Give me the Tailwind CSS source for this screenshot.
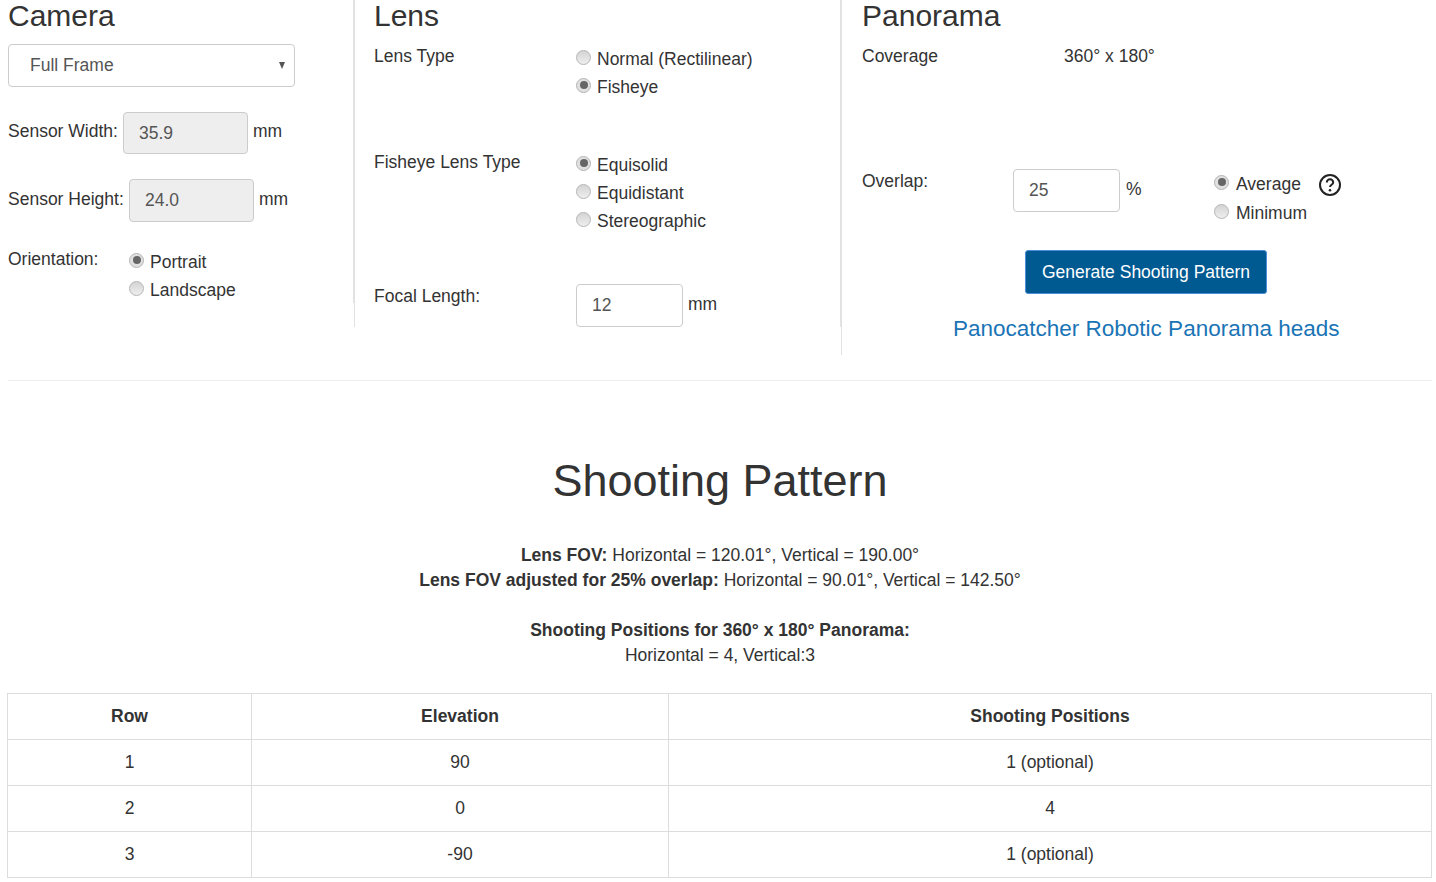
<!DOCTYPE html>
<html><head><meta charset="utf-8"><title>Panorama</title>
<script src="https://cdn.jsdelivr.net/npm/@tailwindcss/browser@4"></script></head>
<body class="bg-white overflow-hidden text-[#333] text-[17.5px] leading-[25px] font-['Liberation_Sans',Arial,sans-serif]">
<div class="h-[882px] w-[1436px] overflow-hidden pl-[8px] pr-[4px]">
  <div class="flex h-[372px] items-start">
    <!-- Camera -->
    <section class="w-[346px] h-[303px] border-r border-[#e2e2e2]">
      <h3 class="text-[30px] leading-[32px] h-[44px] text-[#333]">Camera</h3>
      <div class="w-[287px] h-[43px] border border-[#ccc] rounded-[4px] flex items-center justify-between pl-[21px] pr-[9px] text-[#555]"><span>Full Frame</span><span class="w-0 h-0 border-l-[3.5px] border-r-[3.5px] border-t-[7px] border-l-transparent border-r-transparent border-t-[#555]"></span></div>
      <div class="flex items-center mt-[25px] h-[42px]"><span class="w-[115px] -mt-[3px]">Sensor Width:</span><div class="w-[125px] h-[42px] bg-[#eee] border border-[#ccc] rounded-[4px] pl-[15px] flex items-center text-[#555]">35.9</div><span class="ml-[5px] -mt-[3px]">mm</span></div>
      <div class="flex items-center mt-[25px] h-[43px]"><span class="w-[121px] -mt-[2px]">Sensor Height:</span><div class="w-[125px] h-[43px] bg-[#eee] border border-[#ccc] rounded-[4px] pl-[15px] flex items-center text-[#555]">24.0</div><span class="ml-[5px] -mt-[2px]">mm</span></div>
      <div class="flex mt-[25px]"><span class="w-[121px]">Orientation:</span>
        <div class="flex flex-col pt-[3px] gap-[3px]">
          <label class="flex items-center gap-[6px] h-[25px]"><span class="w-[15px] h-[15px] rounded-full border border-[#b5b5b5] bg-[#e0e0e0] flex items-center justify-center -mt-[5px]"><span class="w-[8px] h-[8px] rounded-full bg-[#666]"></span></span>Portrait</label>
          <label class="flex items-center gap-[6px] h-[25px]"><span class="w-[15px] h-[15px] rounded-full border border-[#b5b5b5] bg-gradient-to-b from-[#d4d4d4] to-[#eee] -mt-[5px]"></span>Landscape</label>
        </div>
      </div>
    </section>
    <!-- Lens -->
    <section class="w-[487px] h-[327px] border-x border-[#e2e2e2] pl-[19px]">
      <h3 class="text-[30px] leading-[32px] h-[44px]">Lens</h3>
      <div class="flex h-[106px]"><span class="w-[202px]">Lens Type</span>
        <div class="flex flex-col pt-[3px] gap-[3px]">
          <label class="flex items-center gap-[6px] h-[25px]"><span class="w-[15px] h-[15px] rounded-full border border-[#b5b5b5] bg-gradient-to-b from-[#d4d4d4] to-[#eee] -mt-[5px]"></span>Normal (Rectilinear)</label>
          <label class="flex items-center gap-[6px] h-[25px]"><span class="w-[15px] h-[15px] rounded-full border border-[#b5b5b5] bg-[#e0e0e0] flex items-center justify-center -mt-[5px]"><span class="w-[8px] h-[8px] rounded-full bg-[#666]"></span></span>Fisheye</label>
        </div>
      </div>
      <div class="flex h-[134px]"><span class="w-[202px]">Fisheye Lens Type</span>
        <div class="flex flex-col pt-[3px] gap-[3px]">
          <label class="flex items-center gap-[6px] h-[25px]"><span class="w-[15px] h-[15px] rounded-full border border-[#b5b5b5] bg-[#e0e0e0] flex items-center justify-center -mt-[5px]"><span class="w-[8px] h-[8px] rounded-full bg-[#666]"></span></span>Equisolid</label>
          <label class="flex items-center gap-[6px] h-[25px]"><span class="w-[15px] h-[15px] rounded-full border border-[#b5b5b5] bg-gradient-to-b from-[#d4d4d4] to-[#eee] -mt-[5px]"></span>Equidistant</label>
          <label class="flex items-center gap-[6px] h-[25px]"><span class="w-[15px] h-[15px] rounded-full border border-[#b5b5b5] bg-gradient-to-b from-[#d4d4d4] to-[#eee] -mt-[5px]"></span>Stereographic</label>
        </div>
      </div>
      <div class="flex"><span class="w-[202px]">Focal Length:</span><div class="w-[107px] h-[43px] border border-[#ccc] rounded-[4px] pl-[15px] flex items-center text-[#555]">12</div><span class="ml-[5px] mt-[8px]">mm</span></div>
    </section>
    <!-- Panorama -->
    <section class="flex-1 h-[355px] border-l border-[#e2e2e2] pl-[20px]">
      <h3 class="text-[30px] leading-[32px] h-[44px]">Panorama</h3>
      <div class="flex h-[125px]"><span class="w-[202px]">Coverage</span><span>360° x 180°</span></div>
      <div class="flex h-[81px]"><span class="w-[151px]">Overlap:</span>
        <div class="w-[107px] h-[43px] border border-[#ccc] rounded-[4px] pl-[15px] flex items-center text-[#555]">25</div>
        <span class="ml-[6px] mt-[8px] w-[88px]">%</span>
        <div class="flex flex-col pt-[3px] gap-[4px]">
          <label class="flex items-center gap-[7px] h-[25px]"><span class="w-[15px] h-[15px] rounded-full border border-[#b5b5b5] bg-[#e0e0e0] flex items-center justify-center -mt-[5px]"><span class="w-[8px] h-[8px] rounded-full bg-[#666]"></span></span>Average
            <svg class="ml-[10px]" width="24" height="24" viewBox="0 0 24 24" fill="none"><circle cx="12" cy="12" r="10" stroke="#222" stroke-width="2"/><path d="M8.8 9.5a3.2 3.2 0 0 1 6.4 0c0 2.2-3.2 2.4-3.2 4.5" stroke="#222" stroke-width="2" fill="none"/><circle cx="12" cy="17.3" r="1.3" fill="#222"/></svg></label>
          <label class="flex items-center gap-[7px] h-[25px]"><span class="w-[15px] h-[15px] rounded-full border border-[#b5b5b5] bg-gradient-to-b from-[#d4d4d4] to-[#eee] -mt-[5px]"></span>Minimum</label>
        </div>
      </div>
      <div class="w-[242px] h-[44px] ml-[163px] bg-[#005a92] border border-[#4a8fd8] rounded-[3px] text-white flex items-center justify-center">Generate Shooting Pattern</div>
      <a href="#" class="block text-center text-[22.5px] leading-[30px] mt-[20px] ml-[91px] w-[386px] text-[#1a74b5] whitespace-nowrap">Panocatcher Robotic Panorama heads</a>
    </section>
  </div>
  <hr class="border-0 border-t border-[#eee] mt-[8px]">
  <h1 class="text-center text-[45px] leading-[50px] mt-[75px]">Shooting Pattern</h1>
  <div class="text-center mt-[37px]">
    <p><b>Lens FOV:</b> Horizontal = 120.01°, Vertical = 190.00°</p>
    <p><b>Lens FOV adjusted for 25% overlap:</b> Horizontal = 90.01°, Vertical = 142.50°</p>
    <p class="mt-[25px]"><b>Shooting Positions for 360° x 180° Panorama:</b></p>
    <p>Horizontal = 4, Vertical:3</p>
  </div>
  <table class="mt-[25px] -ml-px w-[1425px] border-collapse table-fixed text-center">
    <colgroup><col class="w-[244px]"><col class="w-[417px]"><col></colgroup>
    <tbody>
    <tr class="h-[46px]"><th class="border border-[#ddd]">Row</th><th class="border border-[#ddd]">Elevation</th><th class="border border-[#ddd]">Shooting Positions</th></tr>
    <tr class="h-[46px]"><td class="border border-[#ddd]">1</td><td class="border border-[#ddd]">90</td><td class="border border-[#ddd]">1 (optional)</td></tr>
    <tr class="h-[46px]"><td class="border border-[#ddd]">2</td><td class="border border-[#ddd]">0</td><td class="border border-[#ddd]">4</td></tr>
    <tr class="h-[46px]"><td class="border border-[#ddd]">3</td><td class="border border-[#ddd]">-90</td><td class="border border-[#ddd]">1 (optional)</td></tr>
    </tbody>
  </table>
</div>
</body></html>
